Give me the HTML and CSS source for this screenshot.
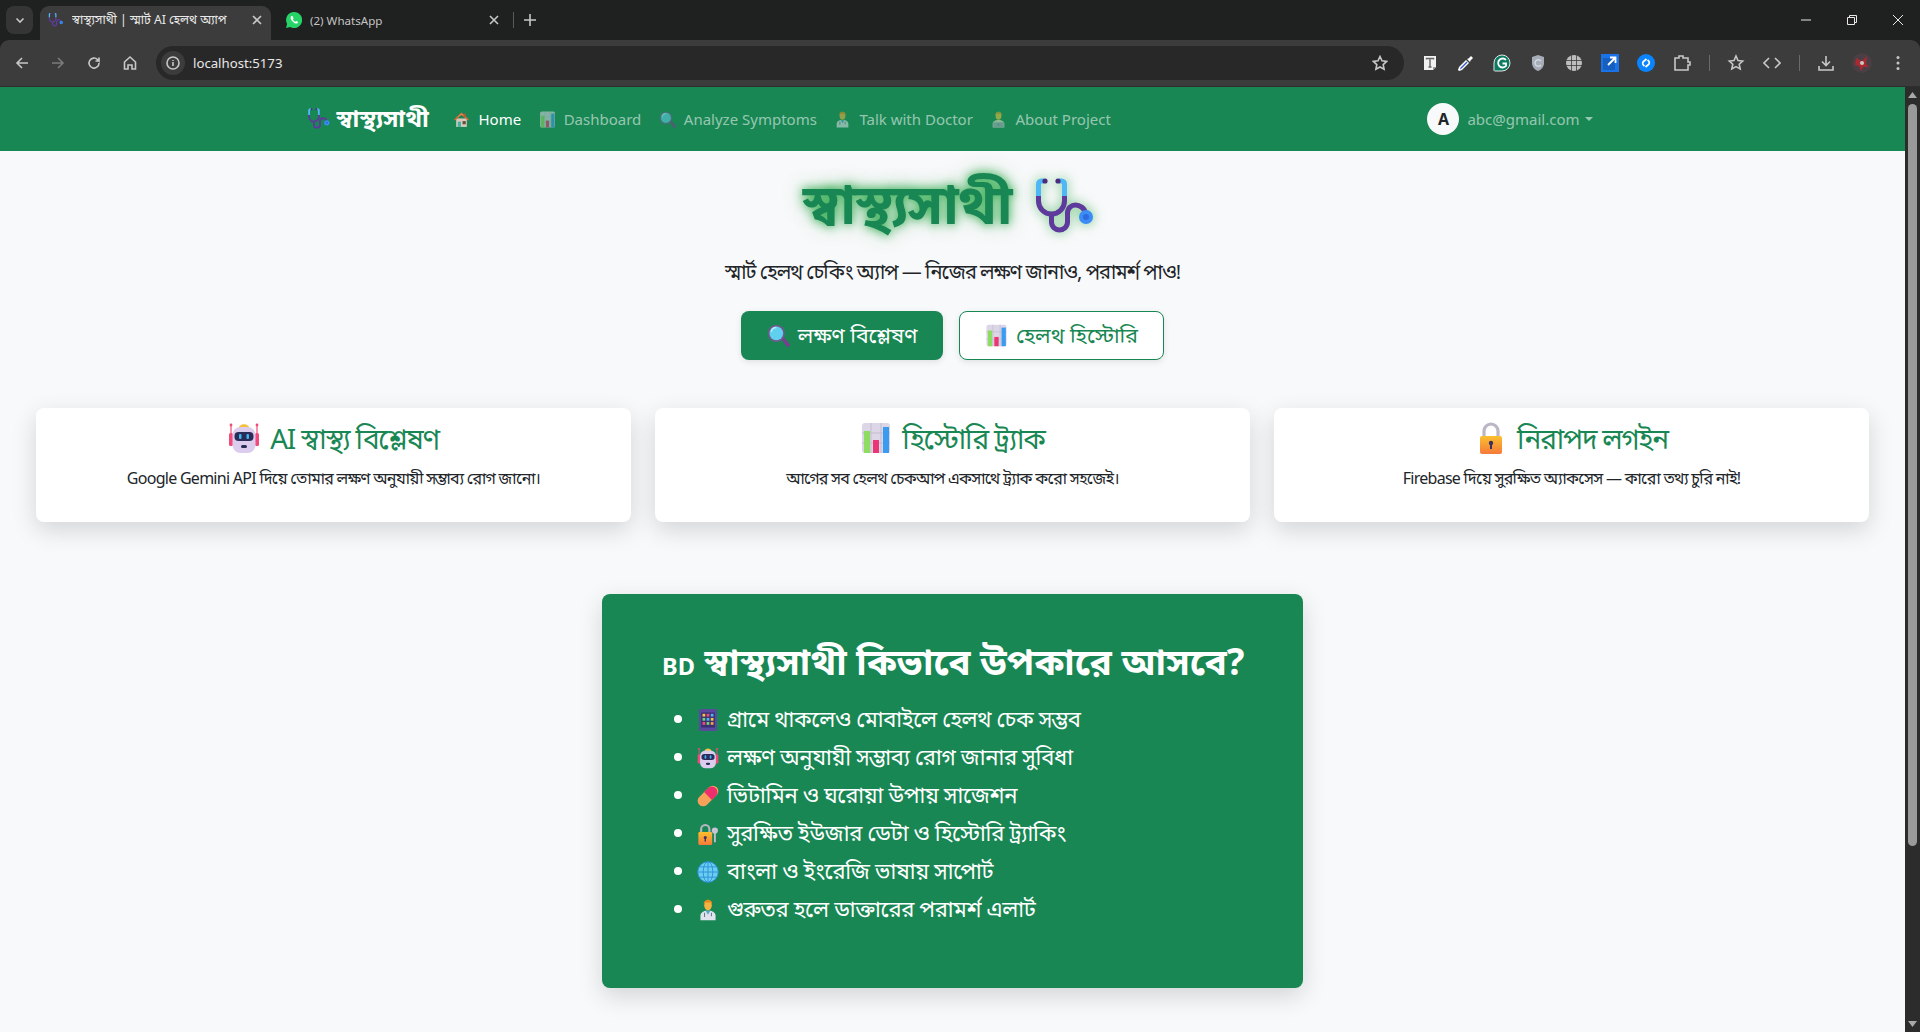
FILE: index.html
```html
<!DOCTYPE html>
<html lang="bn">
<head>
<meta charset="utf-8">
<title>স্বাস্থ্যসাথী | স্মার্ট AI হেলথ অ্যাপ</title>
<link rel="stylesheet" href="styles.css">
</head>
<body>
<svg class="sprite" width="0" height="0" aria-hidden="true">
  <defs>
    <symbol id="steth" viewBox="0 0 64 64">
      <path d="M18.500 38v9c0 5 4 8 8 8s8-3 8-8V38c0-5 4-8 8-8s9 3 10 8" fill="none" stroke="#5d3a9b" stroke-width="5"/>
      <path d="M5.500 20v6a13 13 0 0 0 26 0v-6" fill="none" stroke="#5d3a9b" stroke-width="5"/>
      <path d="M11 6H8.500a3 3 0 0 0-3 3v12M26 6h2.500a3 3 0 0 1 3 3v12" fill="none" stroke="#4db8f5" stroke-width="5"/>
      <circle cx="12" cy="6" r="2.600" fill="#4a2b7c"/><circle cx="25" cy="6" r="2.600" fill="#4a2b7c"/>
      <circle cx="53" cy="42" r="7" fill="#3b8df5"/><circle cx="53" cy="42" r="3" fill="#2e6be0"/>
    </symbol>
    <symbol id="house" viewBox="0 0 32 32">
      <path d="M6 14h20v16H6z" fill="#d9c9b8"/><path d="M2 16 16 3l14 13-2 2L16 7 4 18z" fill="#e8623c"/>
      <path d="M6 13 16 4l10 9-10-6z" fill="#f08a4a"/><rect x="20" y="5" width="4" height="6" fill="#b9573a"/>
      <rect x="9" y="20" width="6" height="10" fill="#3db6a8"/><rect x="18" y="19" width="6" height="6" fill="#6b4a3a"/>
    </symbol>
    <symbol id="chart" viewBox="0 0 32 32">
      <rect x="2" y="1" width="28" height="30" rx="3" fill="#dcd6e6"/>
      <path d="M2 11h28M2 21h28M11 1v30M21 1v30" stroke="#c3bcd2" stroke-width="1"/>
      <rect x="4" y="9" width="6" height="22" fill="#8fdc62"/><rect x="13" y="18" width="6" height="13" fill="#ec3574"/><rect x="23" y="5" width="6" height="26" fill="#3a9bf0"/>
    </symbol>
    <symbol id="glass" viewBox="0 0 32 32">
      <path d="m20 21 3-3 8 9a2.500 2.500 0 0 1-4 4z" fill="#7a3e8f"/>
      <circle cx="13" cy="13" r="12" fill="#6f5a8e"/><circle cx="13" cy="13" r="9.500" fill="#5fd0ee"/>
      <path d="M6 11a7 7 0 0 1 7-6" stroke="#b5ecf9" stroke-width="2" fill="none"/>
    </symbol>
    <symbol id="doctor" viewBox="0 0 32 32">
      <path d="M5 31v-7c0-4 4-6 7-7h8c3 1 7 3 7 7v7z" fill="#dfe3ee"/>
      <path d="m12.500 17 3.500 6 3.500-6z" fill="#5aa7c9"/>
      <path d="M11 20v6M21 20v5" stroke="#6a7487" stroke-width="1.500" fill="none"/>
      <ellipse cx="16" cy="9" rx="5.500" ry="7.500" fill="#f5b342"/><path d="M10 8c-1-9 13-9 12 0l-2-3h-8z" fill="#e58a1f"/>
    </symbol>
    <symbol id="tech" viewBox="0 0 32 32">
      <path d="M5 31v-7c0-4 4-6 8-7h6c4 1 8 3 8 7v7z" fill="#ece1c8"/>
      <rect x="6" y="21" width="20" height="10" rx="1" fill="#a7b0c2"/><circle cx="16" cy="26" r="1.500" fill="#6f7a8e"/>
      <ellipse cx="16" cy="9" rx="5.500" ry="7.500" fill="#f5c542"/><path d="M10 8c-1-9 13-9 12 0l-2-3h-8z" fill="#e09a2a"/>
    </symbol>
    <symbol id="robot" viewBox="0 0 32 32">
      <path d="M3 4v19M29 4v19" stroke="#f24b7b" stroke-width="1.200"/><circle cx="3" cy="3" r="1.400" fill="#f24b7b"/><circle cx="29" cy="3" r="1.400" fill="#f24b7b"/>
      <rect x="1" y="11" width="4" height="13" rx="1.500" fill="#f24b7b"/><rect x="27" y="11" width="4" height="13" rx="1.500" fill="#f24b7b"/>
      <path d="M11 6c0-5 10-5 10 0z" fill="#f6c23e"/>
      <rect x="4.500" y="5" width="23" height="26" rx="8" fill="#dccdee"/>
      <rect x="6.500" y="10" width="19" height="9" rx="4" fill="#2b2c57"/>
      <rect x="11" y="12" width="2.500" height="5" rx="1" fill="#3fb7f5"/><rect x="18.500" y="12" width="2.500" height="5" rx="1" fill="#3fb7f5"/>
      <rect x="13" y="23" width="6" height="3" rx="1.500" fill="#2b2c57"/>
    </symbol>
    <symbol id="lock" viewBox="0 0 32 32">
      <path d="M9 15V9a7 7 0 0 1 14 0v6" fill="none" stroke="#bcb6c6" stroke-width="3.200"/>
      <rect x="5" y="14" width="22" height="18" rx="2" fill="url(#lockg)"/>
      <circle cx="16" cy="21" r="2.200" fill="#3c3060"/><rect x="15" y="21" width="2" height="6" fill="#3c3060"/>
    </symbol>
    <symbol id="lockkey" viewBox="0 0 32 32">
      <path d="M6 14V9a6 6 0 0 1 12 0v5" fill="none" stroke="#bcb6c6" stroke-width="3"/>
      <rect x="2" y="13" width="20" height="19" rx="2" fill="url(#lockg)"/>
      <circle cx="12" cy="21" r="2.200" fill="#3c3060"/><rect x="11" y="21" width="2" height="6" fill="#3c3060"/>
      <circle cx="26" cy="11" r="4.500" fill="#c9c3d6"/><rect x="24.800" y="13" width="2.500" height="15" fill="#c9c3d6"/>
    </symbol>
    <symbol id="phone" viewBox="0 0 32 32">
      <rect x="3" y="0" width="26" height="32" rx="2" fill="#5a4a9e"/>
      <rect x="6" y="5" width="20" height="22" fill="#3b2f73"/>
      <g fill="#f5c542"><rect x="8" y="7" width="4" height="4"/><rect x="20" y="13" width="4" height="4"/></g>
      <g fill="#f24b7b"><rect x="14" y="7" width="4" height="4"/><rect x="8" y="19" width="4" height="4"/></g>
      <g fill="#47b6f2"><rect x="20" y="7" width="4" height="4"/><rect x="14" y="13" width="4" height="4"/></g>
      <g fill="#72d572"><rect x="8" y="13" width="4" height="4"/><rect x="14" y="19" width="4" height="4"/></g>
      <rect x="20" y="19" width="4" height="4" fill="#f5a142"/>
    </symbol>
    <symbol id="pill" viewBox="0 0 32 32">
      <rect x="8" y="-2" width="16" height="36" rx="8" transform="rotate(45 16 16)" fill="#f6a15a"/>
      <path d="M10.300 10.300 21.700 21.700 27.300 16.100A8 8 0 0 0 15.900 4.700z" fill="#ee2f6e"/>
    </symbol>
    <symbol id="globe" viewBox="0 0 32 32">
      <circle cx="16" cy="16" r="15" fill="#6ccdf3"/>
      <g fill="none" stroke="#2a8fd4" stroke-width="1.300"><circle cx="16" cy="16" r="15"/><ellipse cx="16" cy="16" rx="7" ry="15"/><path d="M16 1v30M1 16h30M3.500 8.500h25M3.500 23.500h25"/></g>
    </symbol>
    <linearGradient id="lockg" x1="0" y1="0" x2="0" y2="1"><stop offset="0" stop-color="#fbc02d"/><stop offset="1" stop-color="#f5793b"/></linearGradient>
  </defs>
</svg>

<div class="browser">
  <div class="tabstrip">
    <button class="tab-search"><svg width="12" height="12" viewBox="0 0 12 12"><path d="m2.500 4.500 3.500 3.500 3.500-3.500" class="line"/></svg></button>
    <div class="tab tab-active">
      <svg class="tab-icon" width="16" height="16"><use href="#steth"/></svg>
      <span class="tab-title">স্বাস্থ্যসাথী | স্মার্ট AI হেলথ অ্যাপ</span>
      <svg class="tab-close" width="10" height="10" viewBox="0 0 10 10"><path d="m1 1 8 8M9 1 1 9" class="line"/></svg>
    </div>
    <div class="tab tab-idle">
      <svg class="tab-icon" width="16" height="16" viewBox="0 0 16 16"><path d="M8 0a8 8 0 0 0-6.900 12L0 16l4.100-1.100A8 8 0 1 0 8 0z" fill="#25d366"/><path d="M5.500 4c-1 .6-1.200 2-.3 3.700 1 1.800 2.900 3.600 5 3.900 1 .1 1.800-.6 2-1.500l-2-1.200-.9.900c-.9-.3-2-1.400-2.500-2.500l.8-.9-1-2.300z" fill="#fff"/></svg>
      <span class="tab-title dim">(2) WhatsApp</span>
      <svg class="tab-close" width="10" height="10" viewBox="0 0 10 10"><path d="m1 1 8 8M9 1 1 9" class="line"/></svg>
    </div>
    <span class="tab-sep"></span>
    <svg class="tab-plus" width="14" height="14" viewBox="0 0 14 14"><path d="M7 1v12M1 7h12" class="line"/></svg>
    <div class="win-controls">
      <svg width="12" height="12" viewBox="0 0 12 12"><path d="M1 6h10" class="thin"/></svg>
      <svg width="12" height="12" viewBox="0 0 12 12"><path d="M1.500 3.500h7v7h-7zM3.500 3.500v-2h7v7h-2" class="thin"/></svg>
      <svg width="12" height="12" viewBox="0 0 12 12"><path d="m1 1 10 10M11 1 1 11" class="thin"/></svg>
    </div>
  </div>
  <div class="toolbar">
    <div class="nav-btns">
      <svg width="16" height="16" viewBox="0 0 16 16"><path d="M14 8H3M8 3 3 8l5 5" class="line"/></svg>
      <svg class="faded" width="16" height="16" viewBox="0 0 16 16"><path d="M2 8h11M8 3l5 5-5 5" class="line"/></svg>
      <svg width="16" height="16" viewBox="0 0 16 16"><path d="M13 8a5 5 0 1 1-1.500-3.500L13 6V2.500M13 6H9.500" class="line"/></svg>
      <svg width="16" height="16" viewBox="0 0 16 16"><path d="M8 2 2.500 7v7h3.500v-4h4v4h3.500V7z" class="line"/></svg>
    </div>
    <div class="omnibox">
      <span class="info-chip"><svg width="16" height="16" viewBox="0 0 16 16"><circle cx="8" cy="8" r="6" class="line"/><path d="M8 7v4M8 5v1" class="line"/></svg></span>
      <span class="url">localhost:5173</span>
      <svg class="omni-star" width="16" height="16" viewBox="0 0 16 16"><path d="m8 1.500 2 4.300 4.700.6-3.500 3.200.9 4.700L8 12l-4.100 2.300.9-4.700-3.500-3.200L6 5.800z" class="line"/></svg>
    </div>
    <div class="ext-icons">
      <span class="ext"><svg width="18" height="18" viewBox="0 0 18 18"><path d="M3 2h12v11l-3 3H3z" fill="#f1f1f1"/><path d="M12 16v-3h3z" fill="#9a9a9a"/><path d="M5.500 5.500V4.500h7v1M9 4.500v8.500M7.500 13h3" fill="none" stroke="#666" stroke-width="1.400"/></svg></span>
      <span class="ext"><svg width="18" height="18" viewBox="0 0 18 18"><path d="m2 17-1-1 1-3 7-7 3 3-7 7z" fill="#fff"/><path d="m3 15.500.6-2 6-6 1 1-6 6z" fill="#3d5bd0"/><path d="m10 5 1.500-.5L14 2l2 2-2.500 2.500L13 8z" fill="#fff"/></svg></span>
      <span class="ext"><svg width="18" height="18" viewBox="0 0 18 18"><path d="M1 16.500V9a8 8 0 1 1 8 8H1.500z" fill="#0d7a62" stroke="#e5e5e5" stroke-width="1"/><path d="M13 6a4.500 4.500 0 1 0 0 6V9.500H9.500" fill="none" stroke="#fff" stroke-width="1.800"/></svg></span>
      <span class="ext"><svg width="18" height="18" viewBox="0 0 18 18"><path d="M9 1 3 3v6c0 4 3 7 6 8 3-1 6-4 6-8V3z" fill="#a6adb8"/><path d="M12 7a3.300 3.300 0 1 0 0 4" fill="none" stroke="#d4d8de" stroke-width="1.500"/></svg></span>
      <span class="ext"><svg width="18" height="18" viewBox="0 0 18 18"><circle cx="9" cy="9" r="8" fill="#bdbdbd"/><path d="M1 6.500h16M1 11.500h16M6.500 1v16M11.500 1v16" stroke="#3c3c3c" stroke-width=".8"/></svg></span>
      <span class="ext"><svg width="18" height="18" viewBox="0 0 18 18"><rect width="18" height="18" fill="#1a73e8"/><rect x="2" y="4" width="12" height="12" fill="#155fc0"/><path d="m7 11 7-7M9 3.500h5.500V9" fill="none" stroke="#fff" stroke-width="1.800"/></svg></span>
      <span class="ext"><svg width="18" height="18" viewBox="0 0 18 18"><circle cx="9" cy="9" r="9" fill="#0a84ff"/><path d="m7.500 12-1-.8a2.500 2.500 0 0 1 0-3.700L9.500 5M10.500 6l1 .8a2.500 2.500 0 0 1 0 3.700L8.500 13" fill="none" stroke="#fff" stroke-width="1.700"/></svg></span>
      <span class="ext"><svg width="18" height="18" viewBox="0 0 18 18"><path d="M2 4h4V2h4v2h5v4h2v3h-2v5H2z" class="line"/></svg></span>
      <span class="bar"></span>
      <span class="ext"><svg width="18" height="18" viewBox="0 0 18 18"><path d="m9 2 2 4.500 4.700.5-3.500 3.200 1 4.800L9 12.600 4.800 15l1-4.800L2.300 7 7 6.500z" class="line"/></svg></span>
      <span class="ext"><svg width="18" height="18" viewBox="0 0 18 18"><path d="m6 4-5 5 5 5M12 4l5 5-5 5" class="line"/></svg></span>
      <span class="bar"></span>
      <span class="ext"><svg width="18" height="18" viewBox="0 0 18 18"><path d="M9 2v9M5 7.500 9 11.500l4-4M2 12v4h14v-4" class="line"/></svg></span>
      <span class="ext"><svg width="20" height="20" viewBox="0 0 20 20"><circle cx="10" cy="10" r="10" fill="#4a3f44"/><path d="M4 5l6 3 5-5-1 8 3 3-6 0-2 4-2-5-4-1z" fill="#a82a30"/><circle cx="10" cy="10" r="2" fill="#c9c9c9"/></svg></span>
      <span class="ext"><svg width="18" height="18" viewBox="0 0 18 18"><circle cx="9" cy="3.500" r="1.500" fill="#c7c7c7"/><circle cx="9" cy="9" r="1.500" fill="#c7c7c7"/><circle cx="9" cy="14.500" r="1.500" fill="#c7c7c7"/></svg></span>
    </div>
  </div>
</div>

<div class="viewport">
  <div class="page">
    <nav class="navbar">
      <div class="nav-inner">
        <a class="brand"><svg class="brand-icon"><use href="#steth"/></svg><span>স্বাস্থ্যসাথী</span></a>
        <a class="nav-link active"><svg class="nav-emoji"><use href="#house"/></svg>Home</a>
        <a class="nav-link"><svg class="nav-emoji"><use href="#chart"/></svg>Dashboard</a>
        <a class="nav-link"><svg class="nav-emoji"><use href="#glass"/></svg>Analyze Symptoms</a>
        <a class="nav-link"><svg class="nav-emoji"><use href="#doctor"/></svg>Talk with Doctor</a>
        <a class="nav-link"><svg class="nav-emoji"><use href="#tech"/></svg>About Project</a>
        <div class="user"><span class="avatar">A</span><span class="email">abc@gmail.com</span><span class="caret"></span></div>
      </div>
    </nav>

    <section class="hero">
      <h1 class="hero-title">স্বাস্থ্যসাথী <svg class="hero-icon"><use href="#steth"/></svg></h1>
      <p class="hero-sub">স্মার্ট হেলথ চেকিং অ্যাপ — নিজের লক্ষণ জানাও, পরামর্শ পাও!</p>
      <div class="hero-btns">
        <a class="btn btn-solid"><svg class="btn-emoji"><use href="#glass"/></svg>লক্ষণ বিশ্লেষণ</a>
        <a class="btn btn-outline"><svg class="btn-emoji"><use href="#chart"/></svg>হেলথ হিস্টোরি</a>
      </div>
    </section>

    <section class="cards">
      <article class="card">
        <h3 class="card-title"><svg class="card-emoji"><use href="#robot"/></svg>AI স্বাস্থ্য বিশ্লেষণ</h3>
        <p class="card-text">Google Gemini API দিয়ে তোমার লক্ষণ অনুযায়ী সম্ভাব্য রোগ জানো।</p>
      </article>
      <article class="card">
        <h3 class="card-title"><svg class="card-emoji"><use href="#chart"/></svg>হিস্টোরি ট্র্যাক</h3>
        <p class="card-text">আগের সব হেলথ চেকআপ একসাথে ট্র্যাক করো সহজেই।</p>
      </article>
      <article class="card">
        <h3 class="card-title"><svg class="card-emoji"><use href="#lock"/></svg>নিরাপদ লগইন</h3>
        <p class="card-text">Firebase দিয়ে সুরক্ষিত অ্যাকসেস — কারো তথ্য চুরি নাই!</p>
      </article>
    </section>

    <section class="benefits">
      <h2 class="benefits-title"><span class="flag">BD</span> স্বাস্থ্যসাথী কিভাবে উপকারে আসবে?</h2>
      <ul class="benefits-list">
        <li><svg class="li-emoji"><use href="#phone"/></svg>গ্রামে থাকলেও মোবাইলে হেলথ চেক সম্ভব</li>
        <li><svg class="li-emoji"><use href="#robot"/></svg>লক্ষণ অনুযায়ী সম্ভাব্য রোগ জানার সুবিধা</li>
        <li><svg class="li-emoji"><use href="#pill"/></svg>ভিটামিন ও ঘরোয়া উপায় সাজেশন</li>
        <li><svg class="li-emoji"><use href="#lockkey"/></svg>সুরক্ষিত ইউজার ডেটা ও হিস্টোরি ট্র্যাকিং</li>
        <li><svg class="li-emoji"><use href="#globe"/></svg>বাংলা ও ইংরেজি ভাষায় সাপোর্ট</li>
        <li><svg class="li-emoji"><use href="#doctor"/></svg>গুরুতর হলে ডাক্তারের পরামর্শ এলার্ট</li>
      </ul>
    </section>
  </div>
  <div class="scrollbar">
    <svg class="sb-arrow" width="15" height="17" viewBox="0 0 15 17"><path d="M7.500 5 12 11H3z" fill="#a8a8a8"/></svg>
    <div class="sb-thumb"></div>
    <svg class="sb-arrow sb-down" width="15" height="17" viewBox="0 0 15 17"><path d="M7.500 12 12 6H3z" fill="#a8a8a8"/></svg>
  </div>
</div>
</body>
</html>
```
FILE: styles.css
```css
* { box-sizing: border-box; }
html, body { margin: 0; height: 100%; overflow: hidden; }
body {
  display: flex;
  flex-direction: column;
  height: 1032px;
  font-family: "Noto Sans", "Noto Sans Bengali", "Noto Serif Bengali", "Lohit Bengali", "FreeSerif", sans-serif;
  background: #f8f9fa;
  color: #212529;
}
.sprite { position: absolute; }
.line { fill: none; stroke: #c7c7c7; stroke-width: 1.6; }
.thin { fill: none; stroke: #e8e8e8; stroke-width: 1; }
.faded { opacity: .45; }

/* browser chrome */
.browser { flex: none; height: 87px; background: #1f2020; }
.tabstrip { height: 40px; display: flex; align-items: flex-end; }
.tab-search {
  width: 27px; height: 28px; margin: 0 7px 6px 6px; border: 0; border-radius: 8px;
  background: #353535; display: flex; align-items: center; justify-content: center; padding: 0;
}
.tab {
  height: 34px; display: flex; align-items: center; gap: 8px;
  font-size: 12.300px; color: #e8e8e8; border-radius: 9px 9px 0 0; padding-bottom: 6px;
}
.tab-active { width: 231px; background: #3c3c3c; padding-left: 8px; padding-right: 9px; }
.tab-idle { width: 242px; padding-left: 15px; padding-right: 14px; font-size: 11.600px; }
.tab-title { flex: 1; white-space: nowrap; overflow: hidden; }
.tab-title.dim { color: #c4c4c4; }
.tab-icon { flex: none; }
.tab-close { flex: none; }
.tab-sep { width: 1px; height: 16px; margin: 0 0 12px 0; background: #5a5a5a; }
.tab-plus { margin: 0 0 13px 9px; }
.win-controls { margin-left: auto; display: flex; gap: 34px; padding: 0 16px 14px 0; align-items: center; }

.toolbar {
  height: 47px; background: #3c3c3c; border-radius: 9px 9px 0 0; display: flex; align-items: center;
  border-bottom: 1px solid #2e2e2e;
}
.nav-btns { width: 156px; padding-left: 14px; display: flex; gap: 20px; flex: none; }
.omnibox {
  flex: none; width: 1248px; height: 34px; border-radius: 17px; background: #282828;
  display: flex; align-items: center; padding: 0 16px 0 5px;
}
.info-chip { width: 24px; height: 24px; border-radius: 50%; background: #3c3c3c; display: flex; align-items: center; justify-content: center; }
.url { margin-left: 8px; font-size: 13.200px; color: #e8e8e8; flex: 1; }
.ext-icons { display: flex; align-items: center; flex: none; padding-left: 8px; }
.ext { width: 36px; display: flex; justify-content: center; }
.bar { width: 1px; height: 16px; background: #6a6a6a; margin: 0 -.5px; }
.bar + .ext { margin-left: 9px; }
.ext-icons .ext:has(+ .bar) { margin-right: 9px; }

/* viewport */
.viewport { flex: 1; display: flex; min-height: 0; }
.page { flex: 1; min-width: 0; overflow: hidden; }
.scrollbar { width: 15px; flex: none; background: #2c2c2c; display: flex; flex-direction: column; align-items: center; }
.sb-arrow { flex: none; }
.sb-thumb { width: 9px; height: 742px; border-radius: 5px; background: #9a9a9a; }
.sb-down { margin-top: auto; }

/* navbar */
.navbar { height: 64px; background: #198754; }
.nav-inner { width: 1320px; height: 100%; margin: 0 auto; padding: 0 12px; display: flex; align-items: center; }
.brand { display: flex; align-items: center; gap: 6px; color: #fff; font-weight: 700; font-size: 24px; margin: 0 16px 0 2px; }
.brand-icon { width: 24px; height: 24px; }
.nav-link { display: flex; align-items: center; padding: 8px 8.750px; color: rgba(255,255,255,.55); font-size: 15px; }
.nav-link.active { color: #fff; }
.nav-emoji { width: 17px; height: 17px; margin-right: 8px; opacity: .55; }
.nav-link.active .nav-emoji { opacity: 1; }
.user { margin-left: auto; margin-right: 8px; display: flex; align-items: center; color: rgba(255,255,255,.55); font-size: 15px; }
.avatar {
  width: 32px; height: 32px; border-radius: 50%; background: #f8f9fa; color: #212529; font-weight: 700; font-size: 16px;
  display: flex; align-items: center; justify-content: center; margin-right: 8px;
}
.caret { width: 0; height: 0; margin-left: 5px; border: 4px solid transparent; border-top-color: rgba(255,255,255,.55); border-bottom: 0; }

/* hero */
.hero { text-align: center; padding-top: 13px; }
.hero-title {
  margin: 0; font-size: 56px; line-height: 68px; font-weight: 700; color: #198754; letter-spacing: -1.3px;
  text-shadow: 0 0 10px rgba(40,167,69,.9), 0 0 18px rgba(40,167,69,.5);
  display: flex; justify-content: center; align-items: center; gap: 22px;
}
.hero-icon {
  width: 64px; height: 64px; margin: 11px 5px 0 0;
  filter: drop-shadow(0 0 6px rgba(40,167,69,.7));
}
.hero-sub { margin: 18px 0 0; font-size: 20px; line-height: 30px; letter-spacing: -1px; color: #212529; }
.hero-btns { margin-top: 24px; display: flex; justify-content: center; gap: 16px; }
.btn {
  height: 49px; display: flex; align-items: center; justify-content: center; border-radius: 8px;
  font-size: 21.300px; box-shadow: 0 2px 6px rgba(0,0,0,.1);
}
.btn-solid { width: 202px; background: #198754; color: #fff; }
.btn-outline { width: 205px; background: #fff; color: #198754; border: 1px solid #198754; }
.btn-emoji { width: 23px; height: 23px; margin-right: 8px; }

/* cards */
.cards { margin-top: 48px; padding: 0 36px; display: grid; grid-template-columns: repeat(3, 1fr); gap: 24px; }
.card { height: 114px; background: #fff; border-radius: 8px; padding: 14px 16px 16px; text-align: center; box-shadow: 0 8px 24px rgba(0,0,0,.15); }
.card-title { margin: 0; display: flex; justify-content: center; align-items: center; font-size: 28px; font-weight: 400; line-height: 32px; letter-spacing: -1.2px; color: #198754; }
.card-emoji { width: 32px; height: 32px; margin-right: 10px; }
.card-text { margin: 11.500px 0 0; font-size: 16px; line-height: 24px; letter-spacing: -.72px; color: #212529; }

/* benefits */
.benefits {
  width: 701px; height: 394px; margin: 72px auto 0; background: #198754; color: #fff; border-radius: 8px;
  padding: 39px 30px 0 60px; box-shadow: 0 8px 24px rgba(0,0,0,.15);
}
.benefits-title { margin: 0; font-size: 37px; line-height: 56px; font-weight: 700; white-space: nowrap; }
.flag { font-size: 23.500px; }
.benefits-list { margin: 5px 0 0; padding: 0 0 0 35px; font-size: 22px; line-height: 38px; letter-spacing: -.35px; }
.benefits-list li { white-space: nowrap; }
.li-emoji { width: 22px; height: 24px; margin-right: 8px; vertical-align: -5px; }
```
